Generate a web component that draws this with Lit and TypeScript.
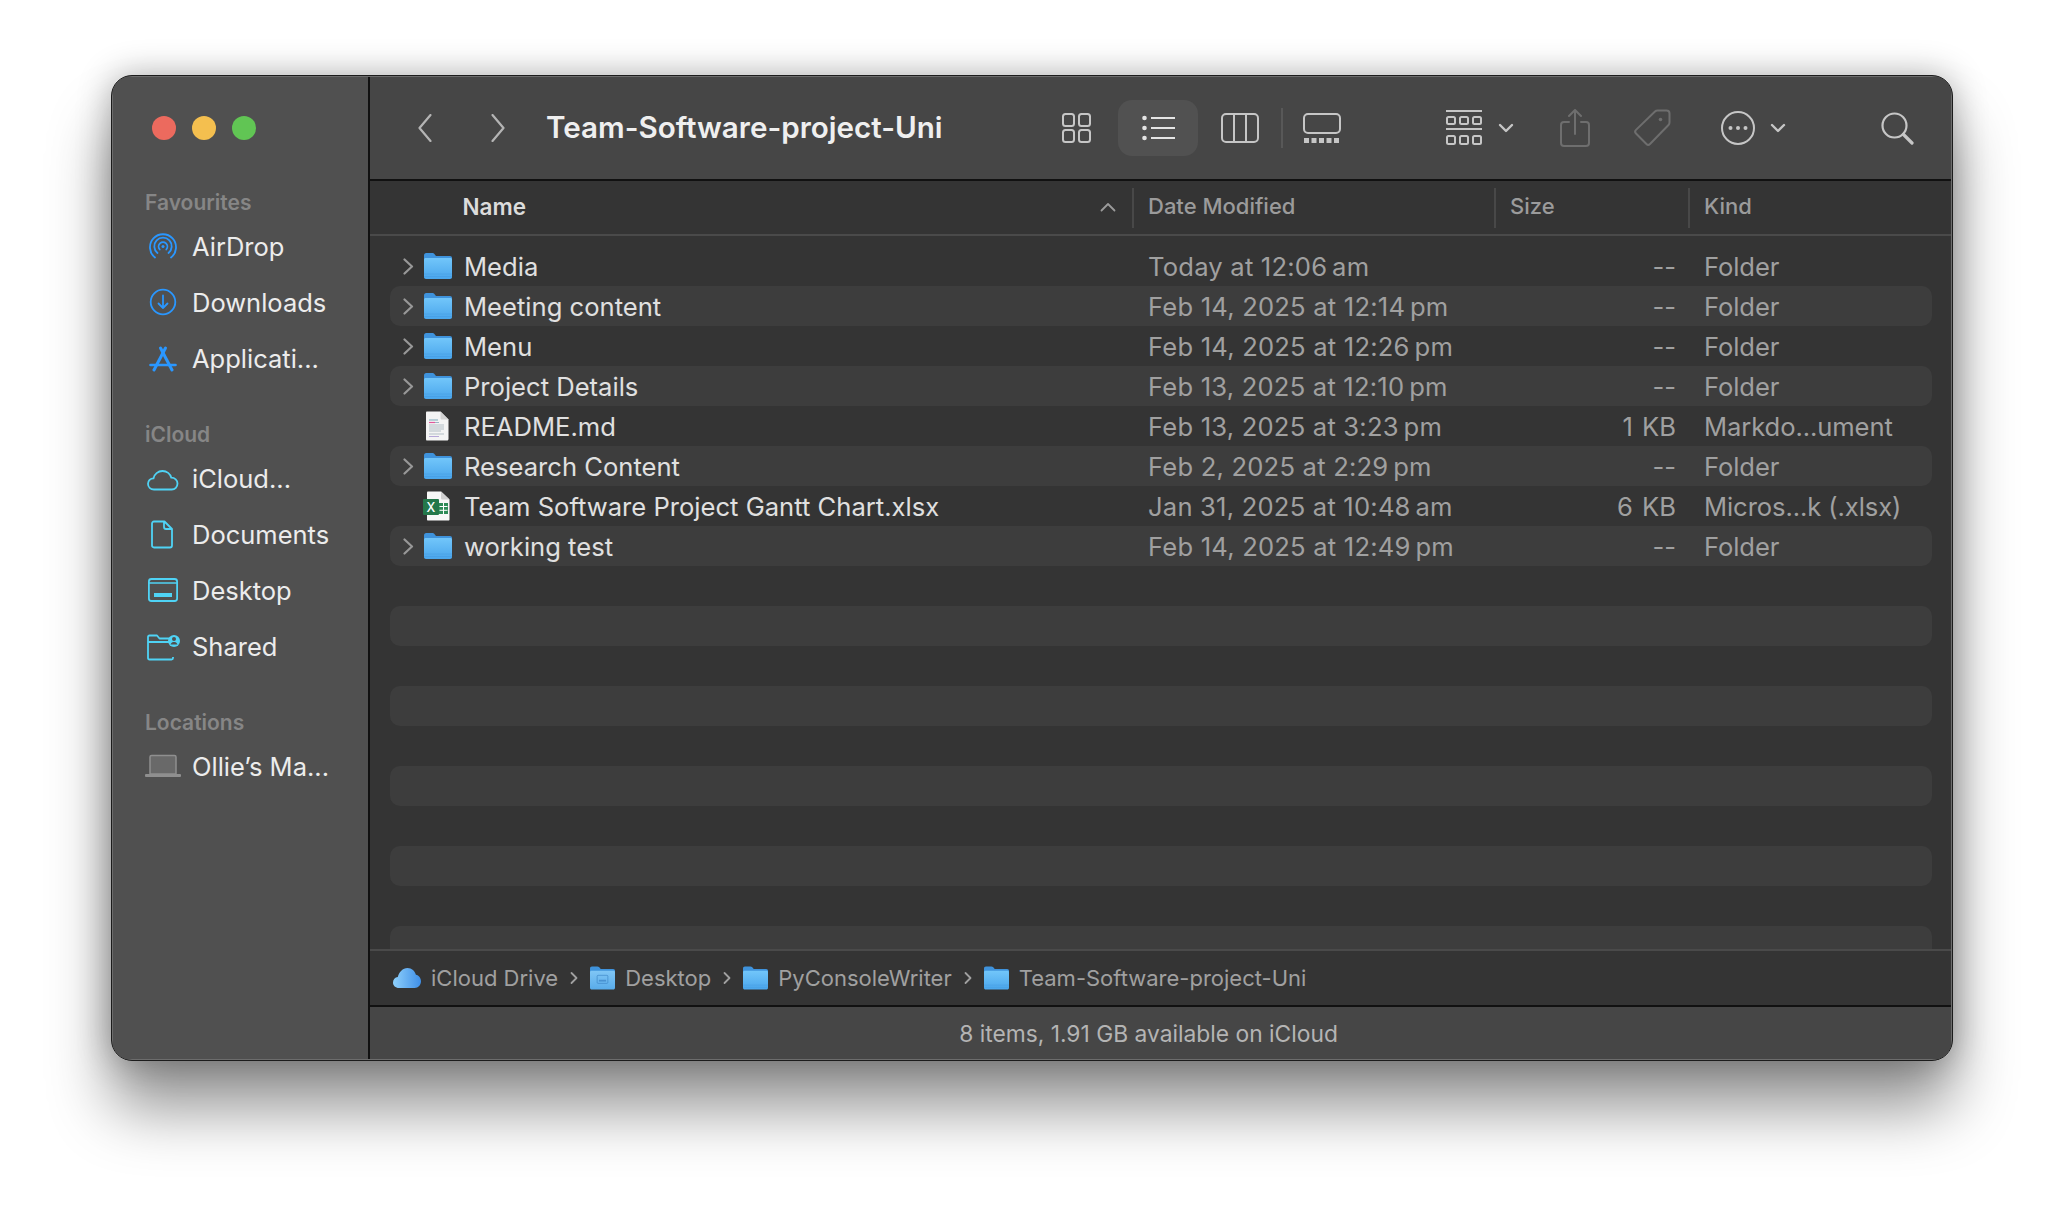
import { LitElement, html, css, svg } from "lit";
import { customElement } from "lit/decorators.js";

const NS = "\u202f";

const folder = (w = 28, h = 26) => html`<svg class="fi" width=${w} height=${h} viewBox="0 0 28 26">
  <defs><linearGradient id="fb" x1="0" y1="0" x2="0" y2="1"><stop offset="0" stop-color="#72c6fa"/><stop offset="1" stop-color="#4aa6ec"/></linearGradient></defs>
  <path d="M0 2.5C0 1 .8 0 2.2 0h6c1 0 1.6.3 2.2 1l1.6 2h14c1.2 0 2 .8 2 2v5H0z" fill="#3f93dc"/>
  <path d="M0 6.5c0-1 .7-1.6 1.7-1.6h24.6c1 0 1.7.6 1.7 1.6V24c0 1.2-.8 2-2 2H2c-1.2 0-2-.8-2-2z" fill="url(#fb)"/>
  <path d="M0 21h28M0 23.5h28" stroke="#3f93dc" stroke-opacity=".45" stroke-width=".8"/>
</svg>`;

const desktopFolder = html`<svg class="fi" width="25" height="24" viewBox="0 0 28 26">
  <defs><linearGradient id="fd" x1="0" y1="0" x2="0" y2="1"><stop offset="0" stop-color="#80c6f5"/><stop offset="1" stop-color="#58abea"/></linearGradient></defs>
  <path d="M0 2.5C0 1 .8 0 2.2 0h6c1 0 1.6.3 2.2 1l1.6 2h14c1.2 0 2 .8 2 2v5H0z" fill="#3f93dc"/>
  <path d="M0 6.5c0-1 .7-1.6 1.7-1.6h24.6c1 0 1.7.6 1.7 1.6V24c0 1.2-.8 2-2 2H2c-1.2 0-2-.8-2-2z" fill="url(#fd)"/>
  <rect x="8" y="10" width="12" height="9" rx="1" fill="none" stroke="#3a82c4" stroke-opacity=".7"/>
  <rect x="10" y="15" width="8" height="2" fill="#3a82c4" fill-opacity=".7"/>
</svg>`;

const doc = html`<svg class="fi" width="26" height="30" viewBox="0 0 26 30">
  <path d="M2 1.5C2 1 2.4.5 3 .5h13.5L24.5 8.5V28c0 .8-.6 1.5-1.5 1.5H3c-.6 0-1-.5-1-1.5z" fill="#f4f4f4"/>
  <path d="M16.5.5V7c0 1 .5 1.5 1.5 1.5h6.5z" fill="#d2d2d2"/>
  <path d="M5 9h9" stroke="#7aa7b8" stroke-width="1"/><path d="M5 11.5h6" stroke="#e0589a" stroke-width="1.2"/><path d="M11 11.5h4" stroke="#9bb5c5" stroke-width="1"/>
  <path d="M5 14h15M5 16h15M5 18h15M5 20h12M5 23h15" stroke="#b3bfc6" stroke-width="1"/>
  <path d="M5 25.5h10" stroke="#b6a8d8" stroke-width="1"/>
</svg>`;

const excel = html`<svg class="fi xl" width="28" height="30" viewBox="0 0 28 30">
  <path d="M4 1.5C4 1 4.4.5 5 .5h13L26.5 8.5V28.5c0 .6-.4 1-1 1H5c-.6 0-1-.4-1-1z" fill="#f7f7f7"/>
  <path d="M18 .5V7c0 1 .5 1.5 1.5 1.5h7z" fill="#d0d0d0"/>
  <rect x="16" y="12" width="9" height="11" fill="#2e8b57"/>
  <path d="M16.5 15.5h8M16.5 19.3h8M20.5 12v11" stroke="#fff" stroke-width="1"/>
  <rect x="0" y="8" width="16" height="16" rx="1" fill="#24774a"/>
  <text x="8" y="20.5" font-size="12.5" font-family="Inter, sans-serif" font-weight="500" fill="#fff" text-anchor="middle">X</text>
</svg>`;

const sideIcons: Record<string, unknown> = {
  airdrop: svg`<g fill="none" stroke="#2a97ff" stroke-width="1.8" stroke-linecap="round">
    <path d="M10 27.5A13 13 0 1 1 26 27.5"/><path d="M12.5 23A8.7 8.7 0 1 1 23.5 23"/><path d="M14.7 19.5A4.4 4.4 0 1 1 21.3 19.5"/></g><circle cx="18" cy="16.5" r="1.5" fill="#2a97ff"/>`,
  downloads: svg`<g fill="none" stroke="#2a97ff" stroke-width="1.8" stroke-linecap="round" stroke-linejoin="round"><circle cx="18" cy="16" r="12.3"/><path d="M18 9.5V22M13.5 17.5 18 22l4.5-4.5"/></g>`,
  apps: svg`<g fill="none" stroke="#2a97ff" stroke-width="3" stroke-linecap="round"><path d="M15.5 6 27 28"/><path d="M20.5 6 9 28"/><path d="M5.5 23h25" stroke-width="2.6"/></g>`,
  cloud: svg`<path d="M9 27.5C5.5 27.5 3 25 3 21.8c0-3 2.4-5.5 5.5-5.5.8-4 4.5-7.3 9-7.3 4.3 0 7.8 2.8 8.8 6.7 3.5 0 6.2 2.6 6.2 5.9 0 3.3-2.5 5.9-5.8 5.9z" fill="none" stroke="#4fd3f5" stroke-width="1.8"/>`,
  docs: svg`<path d="M9 3.5h10.5L27 11v16.5c0 1.2-.8 2-2 2H9c-1.2 0-2-.8-2-2v-22c0-1.2.8-2 2-2zM19 3.5V9c0 1.3.7 2 2 2h6" fill="none" stroke="#4fd3f5" stroke-width="1.8" stroke-linejoin="round"/>`,
  desktop: svg`<rect x="3.9" y="5" width="28.2" height="22" rx="2.5" fill="none" stroke="#4fd3f5" stroke-width="1.8"/><path d="M4 9h28" stroke="#4fd3f5" stroke-width="1.5"/><rect x="9" y="19" width="18" height="4" fill="#4fd3f5"/>`,
  shared: svg`<path d="M28 27v1c0 1-.8 1.5-1.5 1.5H4.5C3.5 29.5 3 29 3 28V7c0-1 .5-1.5 1.5-1.5H12l2.5 3H25M3 12h24" fill="none" stroke="#4fd3f5" stroke-width="1.8" stroke-linejoin="round"/><circle cx="29" cy="11" r="6" fill="#4fd3f5"/><circle cx="29" cy="9" r="2" fill="#505050"/><path d="M25.5 14.5c.8-2 2-2.5 3.5-2.5s2.7.5 3.5 2.5" fill="#505050"/>`,
  laptop: svg`<path d="M5 24V7c0-1 .6-1.5 1.5-1.5h23c1 0 1.5.5 1.5 1.5v17z" fill="#696969" stroke="#8f8f8f" stroke-width="1.5"/><rect x="0" y="24" width="36" height="3" rx="1" fill="#8f8f8f"/>`,
};

const sections = [
  { title: "Favourites", items: [["airdrop", "AirDrop"], ["downloads", "Downloads"], ["apps", "Applicati..."]] },
  { title: "iCloud", items: [["cloud", "iCloud..."], ["docs", "Documents"], ["desktop", "Desktop"], ["shared", "Shared"]] },
  { title: "Locations", items: [["laptop", "Ollie\u2019s Ma..."]] },
];

const files = [
  { name: "Media", date: `Today at 12:06${NS}am`, size: "--", kind: "Folder", type: "folder" },
  { name: "Meeting content", date: `Feb 14, 2025 at 12:14${NS}pm`, size: "--", kind: "Folder", type: "folder" },
  { name: "Menu", date: `Feb 14, 2025 at 12:26${NS}pm`, size: "--", kind: "Folder", type: "folder" },
  { name: "Project Details", date: `Feb 13, 2025 at 12:10${NS}pm`, size: "--", kind: "Folder", type: "folder" },
  { name: "README.md", date: `Feb 13, 2025 at 3:23${NS}pm`, size: "1 KB", kind: "Markdo...ument", type: "doc" },
  { name: "Research Content", date: `Feb 2, 2025 at 2:29${NS}pm`, size: "--", kind: "Folder", type: "folder" },
  { name: "Team Software Project Gantt Chart.xlsx", date: `Jan 31, 2025 at 10:48${NS}am`, size: "6 KB", kind: "Micros...k (.xlsx)", type: "xlsx" },
  { name: "working test", date: `Feb 14, 2025 at 12:49${NS}pm`, size: "--", kind: "Folder", type: "folder" },
];

const crumbChevron = html`<svg class="crumb-chev" width="8" height="14" viewBox="0 0 8 14"><path d="M1.5 2 6.5 7l-5 5" fill="none" stroke="#a0a0a0" stroke-width="1.8" stroke-linecap="round" stroke-linejoin="round"/></svg>`;
const smallChev = html`<svg width="16" height="10" viewBox="0 0 16 10"><path d="M2 2l6 6 6-6" fill="none" stroke="#c6c6c6" stroke-width="2.4" stroke-linecap="round" stroke-linejoin="round"/></svg>`;

@customElement("app-root")
export class AppRoot extends LitElement {
  static styles = css`
    :host { display: block; height: 1208px; background: #fff; font-family: Inter, "Liberation Sans", sans-serif; overflow: hidden; }
    .stage { padding: 75px 111px 0; }
    .window { height: 986px; display: flex; border-radius: 21px; overflow: hidden; box-sizing: border-box; border: 1px solid #1c1c1c; box-shadow: inset 0 0 0 1px #6c6c6c; background: #464646; }
    .shadow { border-radius: 21px; box-shadow: 0 48px 62px rgba(0,0,0,.42), 0 0 34px rgba(0,0,0,.3); }

    .sidebar { width: 255px; flex: none; background: #505050; border-right: 2px solid #111; margin: 1px 0 1px 1px; padding-top: 39px; box-sizing: content-box; }
    .lights { display: flex; gap: 16px; padding-left: 39px; height: 24px; }
    .light { width: 24px; height: 24px; border-radius: 50%; }
    .red { background: #ec6a5e; }
    .yellow { background: #f4bf4f; }
    .green { background: #61c554; }
    .section { margin-top: 35px; }
    .section:first-of-type { margin-top: 49px; }
    .heading { height: 28px; line-height: 28px; padding-left: 32px; font-size: 21px; font-weight: 600; color: #868686; }
    .items { margin-top: 1px; }
    .item { height: 56px; display: flex; align-items: center; padding-left: 32px; color: #ececec; font-size: 25.5px; }
    .item svg { flex: none; margin-right: 11px; }

    .main { flex: 1; min-width: 0; display: flex; flex-direction: column; margin: 1px 1px 1px 0; }
    .toolbar { height: 104px; flex: none; display: flex; align-items: center; background: #464646; border-bottom: 2px solid #111; box-sizing: border-box; }
    .toolbar svg { flex: none; display: block; }
    .t-back { margin-left: 48px; }
    .t-fwd { margin-left: 59px; }
    .title { margin-left: 41px; width: 516px; flex: none; padding-bottom: 2px; color: #efefef; font-size: 29.6px; font-weight: 600; white-space: nowrap; }
    .sel { margin-left: 27px; width: 80px; height: 56px; border-radius: 14px; background: #515151; display: flex; align-items: center; justify-content: center; flex: none; }
    .t-col { margin-left: 23px; }
    .sep { margin-left: 22px; width: 2px; height: 40px; background: #585858; flex: none; }
    .t-gal { margin-left: 20px; }
    .t-grp { margin-left: 105px; }
    .t-chev1 { margin-left: 16px; }
    .t-share { margin-left: 46px; }
    .t-tag { margin-left: 43px; }
    .t-more { margin-left: 49.5px; }
    .t-chev2 { margin-left: 15px; }
    .t-search { margin-left: 95px; }

    .header { height: 55px; flex: none; display: grid; grid-template-columns: 761.5px 362px 194px 1fr; align-items: center; background: #343434; border-bottom: 2px solid #4a4a4a; box-sizing: border-box; font-size: 22px; font-weight: 500; color: #9b9b9b; }
    .hcell { height: 40px; line-height: 36px; padding-left: 14.5px; border-left: 2px solid #484848; box-sizing: border-box; }
    .hname { display: flex; align-items: center; justify-content: space-between; padding: 0 15.5px 2px 92.5px; color: #dcdcdc; font-weight: 600; font-size: 22.5px; border-left: 0; }

    .list { flex: 1; min-height: 0; overflow: hidden; background: #343434; padding: 10px 19px 0 20px; }
    .row { height: 40px; display: grid; grid-template-columns: 34px 40px 684px 347px 181px 28px 1fr; align-items: center; border-radius: 10px; font-size: 25.6px; color: #a0a0a0; white-space: nowrap; }
    .row.alt { background: #3d3d3d; }
    .chev { padding-left: 13px; display: flex; }
    .ic { display: flex; align-items: center; }
    .fi { display: block; flex: none; }
    .xl { margin-left: -1px; }
    .name { color: #e0e0e0; }
    .date { letter-spacing: .2px; }
    .size { text-align: right; word-spacing: 2px; }
    .kind { letter-spacing: -.1px; }

    .pathbar { height: 58px; flex: none; display: flex; align-items: center; padding-left: 23px; background: #343434; border-top: 2px solid #4a4a4a; border-bottom: 2px solid #111; box-sizing: border-box; color: #a0a0a0; font-size: 22px; white-space: nowrap; }
    .crumb-text { margin-left: 10px; }
    .crumb-chev { margin: 0 12px; flex: none; }
    .status { height: 52px; flex: none; display: flex; align-items: center; justify-content: center; background: #464646; color: #b4b4b4; font-size: 22.8px; padding-right: 24px; }
  `;

  private sideIcon(name: string) {
    return html`<svg width="36" height="32" viewBox="0 0 36 32">${sideIcons[name]}</svg>`;
  }

  private fileIcon(type: string) {
    if (type === "doc") return doc;
    if (type === "xlsx") return excel;
    return folder();
  }

  private renderRows() {
    const rows = [];
    for (let i = 0; i < 18; i++) {
      const f = files[i];
      rows.push(html`<div class="row ${i % 2 ? "alt" : ""}">
        ${f
          ? html`<div class="chev">${f.type === "folder"
                ? html`<svg width="11" height="17" viewBox="0 0 11 17"><path d="M1.5 1.5 9 8.5l-7.5 7" fill="none" stroke="#989898" stroke-width="2.2" stroke-linecap="round" stroke-linejoin="round"/></svg>`
                : ""}</div>
              <div class="ic">${this.fileIcon(f.type)}</div>
              <div class="name">${f.name}</div>
              <div class="date">${f.date}</div>
              <div class="size">${f.size}</div>
              <div></div>
              <div class="kind">${f.kind}</div>`
          : ""}
      </div>`);
    }
    return rows;
  }

  render() {
    return html`<div class="stage"><div class="shadow"><div class="window">
      <aside class="sidebar">
        <div class="lights"><div class="light red"></div><div class="light yellow"></div><div class="light green"></div></div>
        ${sections.map((s) => html`<section class="section">
          <div class="heading">${s.title}</div>
          <div class="items">${s.items.map(([ic, label]) => html`<div class="item">${this.sideIcon(ic)}<span>${label}</span></div>`)}</div>
        </section>`)}
      </aside>
      <div class="main">
        <div class="toolbar">
          <svg class="t-back" width="14" height="28" viewBox="0 0 14 28"><path d="M12.5 1 1.5 14l11 13" fill="none" stroke="#b4b4b4" stroke-width="2.2" stroke-linecap="round" stroke-linejoin="round"/></svg>
          <svg class="t-fwd" width="14" height="28" viewBox="0 0 14 28"><path d="M1.5 1l11 13-11 13" fill="none" stroke="#b4b4b4" stroke-width="2.2" stroke-linecap="round" stroke-linejoin="round"/></svg>
          <div class="title">Team-Software-project-Uni</div>
          <svg width="29" height="30" viewBox="0 0 29 30" fill="none" stroke="#c6c6c6" stroke-width="2"><rect x="1" y="1" width="11" height="12" rx="2.5"/><rect x="17" y="1" width="11" height="12" rx="2.5"/><rect x="1" y="17" width="11" height="12" rx="2.5"/><rect x="17" y="17" width="11" height="12" rx="2.5"/></svg>
          <div class="sel"><svg width="33" height="26" viewBox="0 0 33 26"><g fill="#e4e4e4"><circle cx="2.5" cy="3" r="2.3"/><circle cx="2.5" cy="13" r="2.3"/><circle cx="2.5" cy="23" r="2.3"/></g><path d="M9 3h24M9 13h24M9 23h24" stroke="#e4e4e4" stroke-width="2.2"/></svg></div>
          <svg class="t-col" width="38" height="30" viewBox="0 0 38 30" fill="none" stroke="#c6c6c6" stroke-width="2"><rect x="1" y="1" width="36" height="28" rx="4"/><path d="M13 1v28M25 1v28"/></svg>
          <div class="sep"></div>
          <svg class="t-gal" width="38" height="30" viewBox="0 0 38 30"><rect x="1" y="1" width="36" height="19" rx="4" fill="none" stroke="#c6c6c6" stroke-width="2"/><g fill="#c6c6c6"><rect x="1" y="25" width="5" height="5"/><rect x="8.5" y="25" width="5" height="5"/><rect x="16" y="25" width="5" height="5"/><rect x="23.5" y="25" width="5" height="5"/><rect x="31" y="25" width="5" height="5"/></g></svg>
          <svg class="t-grp" width="36" height="36" viewBox="0 0 36 36" fill="none" stroke="#c6c6c6" stroke-width="2"><path d="M0 1h36M0 19h36"/><rect x="1" y="7" width="8" height="7" rx="1.5"/><rect x="14" y="7" width="8" height="7" rx="1.5"/><rect x="27" y="7" width="8" height="7" rx="1.5"/><rect x="1" y="26" width="8" height="8" rx="1.5"/><rect x="14" y="26" width="8" height="8" rx="1.5"/><rect x="27" y="26" width="8" height="8" rx="1.5"/></svg>
          <span class="t-chev1">${smallChev}</span>
          <svg class="t-share" width="30" height="38" viewBox="0 0 30 38" fill="none" stroke="#6e6e6e" stroke-width="2" stroke-linecap="round" stroke-linejoin="round"><path d="M9 13H4c-2 0-3 1-3 3v18c0 2 1 3 3 3h22c2 0 3-1 3-3V16c0-2-1-3-3-3h-5M15 25V2M9 7l6-6 6 6"/></svg>
          <svg class="t-tag" width="38" height="38" viewBox="0 0 38 38" fill="none" stroke="#6e6e6e" stroke-width="2" stroke-linejoin="round"><path d="M22 2.5c.8-.8 1.5-1 2.5-1h9c1.8 0 3 1.2 3 3v9c0 1-.3 1.8-1 2.5L17 35c-1 1-2.6 1-3.6 0L3 24.5c-1-1-1-2.6 0-3.6z"/><circle cx="27.5" cy="10.5" r="1.8" fill="#6e6e6e" stroke="none"/></svg>
          <svg class="t-more" width="34" height="34" viewBox="0 0 34 34" fill="none"><circle cx="17" cy="17" r="16" stroke="#c6c6c6" stroke-width="2"/><g fill="#c6c6c6"><circle cx="9.5" cy="17" r="2"/><circle cx="17" cy="17" r="2"/><circle cx="24.5" cy="17" r="2"/></g></svg>
          <span class="t-chev2">${smallChev}</span>
          <svg class="t-search" width="33" height="33" viewBox="0 0 33 33" fill="none" stroke="#c6c6c6" stroke-linecap="round"><circle cx="13.5" cy="13.5" r="12" stroke-width="2.2"/><path d="M22.5 22.5 31 31" stroke-width="3.2"/></svg>
        </div>
        <div class="header">
          <div class="hcell hname"><span>Name</span><svg width="16" height="10" viewBox="0 0 16 10"><path d="M1.5 8.5 8 2l6.500 6.500" fill="none" stroke="#9b9b9b" stroke-width="1.8" stroke-linecap="round" stroke-linejoin="round"/></svg></div>
          <div class="hcell">Date Modified</div>
          <div class="hcell">Size</div>
          <div class="hcell">Kind</div>
        </div>
        <div class="list">${this.renderRows()}</div>
        <div class="pathbar">
          <svg class="fi" width="28" height="20" viewBox="0 0 28 20"><defs><linearGradient id="cl" x1="0" y1="0" x2="1" y2="0"><stop offset="0" stop-color="#8ed0fb"/><stop offset="1" stop-color="#3f8fe8"/></linearGradient></defs><path d="M6 20C2.5 20 0 17.6 0 14.5c0-2.8 2-5 4.8-5.4C6 4 9.8 0 14.5 0c4.3 0 7.5 3 8.4 6.8 3 .5 5.1 3.3 5.1 6.5 0 3.7-2.7 6.7-6.3 6.7z" fill="url(#cl)"/></svg>
          <span class="crumb-text">iCloud Drive</span>${crumbChevron}
          ${desktopFolder}<span class="crumb-text">Desktop</span>${crumbChevron}
          ${folder(25, 24)}<span class="crumb-text">PyConsoleWriter</span>${crumbChevron}
          ${folder(25, 24)}<span class="crumb-text">Team-Software-project-Uni</span>
        </div>
        <div class="status">8 items, 1.91 GB available on iCloud</div>
      </div>
    </div></div></div>`;
  }
}
